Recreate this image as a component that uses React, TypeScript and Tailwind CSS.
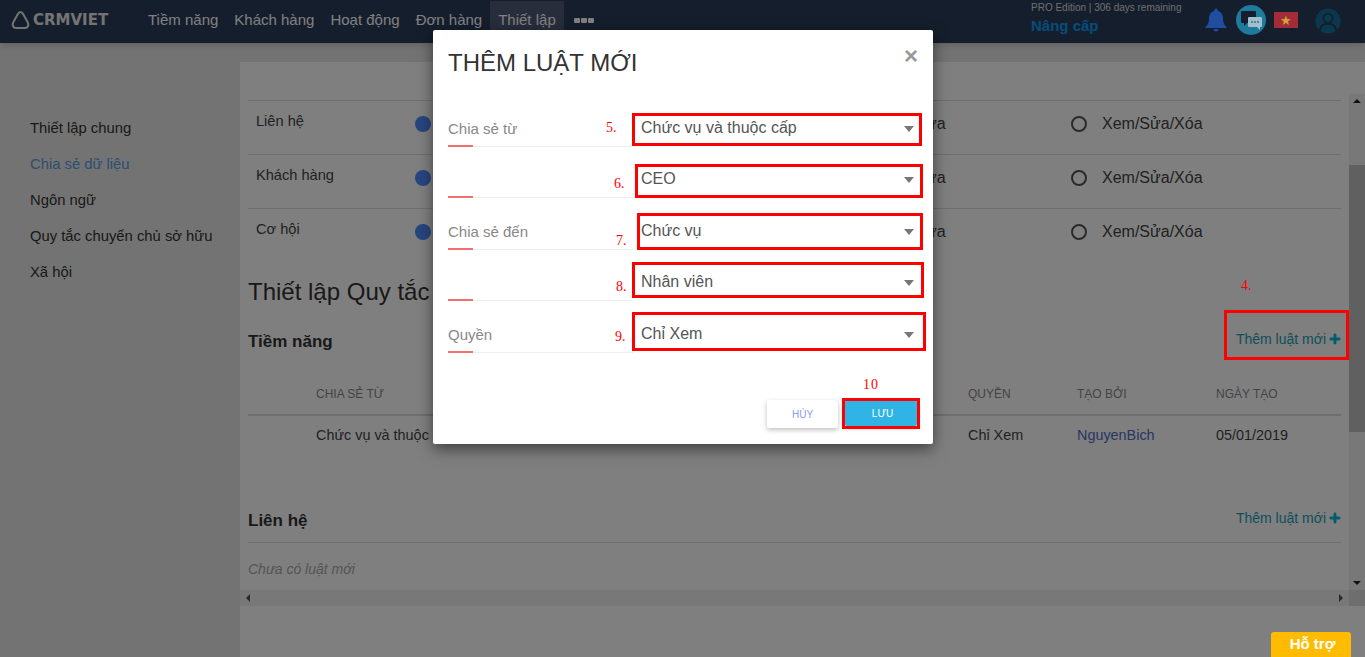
import React from "react";
import { Plus } from "lucide-react";

const navItems = ["Tiềm năng", "Khách hàng", "Hoạt động", "Đơn hàng", "Thiết lập"];
const sideItems = ["Thiết lập chung", "Chia sẻ dữ liệu", "Ngôn ngữ", "Quy tắc chuyển chủ sở hữu", "Xã hội"];
const shareRows = ["Liên hệ", "Khách hàng", "Cơ hội"];

const fields = [
  { label: "Chia sẻ từ", value: "Chức vụ và thuộc cấp", row: "h-[51px]" },
  { label: "", value: "CEO", row: "h-[51px]" },
  { label: "Chia sẻ đến", value: "Chức vụ", row: "h-[52px]" },
  { label: "", value: "Nhân viên", row: "h-[51px]" },
  { label: "Quyền", value: "Chỉ Xem", row: "h-[52px]" },
];

function Radio({ on, label }: { on?: boolean; label?: string }) {
  return (
    <div className="flex items-center gap-[15px] h-4 mt-[15px]">
      {on ? (
        <span className="w-4 h-4 rounded-full bg-[#4d8cff] shrink-0" />
      ) : (
        <span className="w-4 h-4 rounded-full border-2 border-[#555] shrink-0" />
      )}
      {label && <span className="text-base text-[#444] whitespace-nowrap">{label}</span>}
    </div>
  );
}

function AddRule() {
  return (
    <button className="flex items-center gap-[2px] text-sm text-[#1b9db5]">
      Thêm luật mới <Plus size={14} strokeWidth={5} className="text-[#00bcd4]" />
    </button>
  );
}

function Header() {
  return (
    <header className="h-[43px] shrink-0 bg-[#2a3c58] flex items-center relative shadow-md">
      <div className="flex items-center w-[140px] pl-[11px] gap-[3px] pb-[3px]">
        <svg width="19" height="20" viewBox="0 0 19 20" fill="none" stroke="#e8e8e8" strokeWidth="2">
          <path d="M9.5 2 C8 2 7.4 3 6.6 4.4 L2.4 12 C1 14.6 1.6 17.6 4.8 18 L14.2 18 C17.4 17.6 18 14.6 16.6 12 L12.4 4.4 C11.6 3 11 2 9.5 2 Z" />
        </svg>
        <span className="text-[15px] font-bold text-[#e8e8e8] font-['DejaVu_Sans']">CRMVIET</span>
      </div>
      <nav className="flex h-full items-center text-[15px] text-white">
        {navItems.map((item) => (
          <span
            key={item}
            className={
              item === "Thiết lập"
                ? "h-[42px] mt-[1px] px-2 pb-[3px] flex items-center bg-[#505a78]"
                : "px-2 h-full pb-[3px] flex items-center"
            }
          >
            {item}
          </span>
        ))}
        <span className="ml-[10px] mb-[3px] flex gap-[1px]">
          <i className="w-[6px] h-[5px] rounded-[1px] bg-white block" />
          <i className="w-[6px] h-[5px] rounded-[1px] bg-white block" />
          <i className="w-[6px] h-[5px] rounded-[1px] bg-white block" />
        </span>
      </nav>
      <div className="ml-auto flex items-center h-full">
        <div className="w-[174px] h-full pt-[1px]">
          <div className="text-[10px] leading-[13px] text-[#ddd]">PRO Edition | 306 days remaining</div>
          <div className="text-[15px] leading-[22px] mt-px font-bold text-[#0a9bf0]">Nâng cấp</div>
        </div>
        <svg width="22" height="25" viewBox="0 0 22 25" className="relative z-10 mr-[9px] mb-[3px]" fill="#1f4da0">
          <path d="M11 0.5 a1.8 1.8 0 0 1 1.8 1.8 v0.6 C16.6 3.8 18 7 18 10.5 c0 4.5 1.3 6.6 3.5 8.5 v1 H0.5 v-1 C2.7 17.1 4 15 4 10.5 C4 7 5.4 3.8 9.2 2.9 v-0.6 A1.8 1.8 0 0 1 11 0.5 Z M8.5 21 h5 a2.5 2.5 0 0 1 -5 0 Z" />
        </svg>
        <div className="relative z-10 w-[30px] h-[30px] mb-[3px] rounded-full bg-[#1f7b9e] flex items-center justify-center">
          <svg width="24" height="21" viewBox="0 0 24 21">
            <path d="M3 1 h13 a1 1 0 0 1 1 1 v10 a1 1 0 0 1 -1 1 h-8 l-3 3 v-3 h-2 a1 1 0 0 1 -1 -1 v-10 a1 1 0 0 1 1 -1 Z" fill="#141e2c" />
            <path d="M10 7 h12 a1 1 0 0 1 1 1 v8 a1 1 0 0 1 -1 1 h-1 v3 l-3 -3 h-8 a1 1 0 0 1 -1 -1 v-8 a1 1 0 0 1 1 -1 Z" fill="#a3bfcc" />
            <circle cx="13" cy="12" r="1" fill="#1f7b9e" />
            <circle cx="16" cy="12" r="1" fill="#1f7b9e" />
            <circle cx="19" cy="12" r="1" fill="#1f7b9e" />
          </svg>
        </div>
        <div className="relative z-10 w-6 h-4 ml-2 mb-[3px] bg-[#a32c38] flex items-center justify-center text-[13px] leading-none text-[#c9a83a]">★</div>
        <svg width="26" height="26" viewBox="0 0 28 28" className="ml-[17px] mr-[24px] mb-[1px]" fill="none" strokeWidth="2">
          <circle cx="14" cy="14" r="13.5" fill="#14709f" />
          <circle cx="14" cy="11" r="5" stroke="#2a3c58" />
          <path d="M5 24 c1 -5 5 -7 9 -7 s8 2 9 7" stroke="#2a3c58" />
        </svg>
      </div>
    </header>
  );
}

function ScrollArrow({ dir }: { dir: "up" | "down" | "left" | "right" }) {
  const points = {
    up: "4,2 8,6 0,6",
    down: "0,2 8,2 4,6",
    left: "6,0 6,8 2,4",
    right: "2,0 2,8 6,4",
  }[dir];
  return (
    <svg width="8" height="8" viewBox="0 0 8 8" fill={dir === "up" || dir === "down" ? "#222" : "#555"}>
      <polygon points={points} />
    </svg>
  );
}

function Main() {
  return (
    <main className="flex-1 min-w-0 bg-white pt-[32px] flex flex-col">
      <div className="h-[496px] flex">
        <div className="w-[1109px] h-full overflow-hidden px-2 pt-[6px]">
          {shareRows.map((name) => (
            <div key={name} className="h-[54px] border-t border-[#ddd] grid grid-cols-[167px_216px_216px_224px_1fr]">
              <div className="pl-2 pt-[10px] text-[14.6px] text-[#444]">{name}</div>
              <Radio on />
              <Radio />
              <Radio label="Xem/Sửa" />
              <Radio label="Xem/Sửa/Xóa" />
            </div>
          ))}
          <h2 className="h-[60px] flex items-center text-2xl text-[#333]">Thiết lập Quy tắc</h2>
          <div className="h-[38px] flex items-center justify-between">
            <h3 className="text-[17px] font-bold text-[#333] pt-px">Tiềm năng</h3>
            <div className="mb-[5px] mr-[-1px]">
              <AddRule />
            </div>
          </div>
          <div className="mt-3 h-11 pt-px border-b-2 border-[#ddd] grid grid-cols-[68px_652px_109px_139px_1fr] items-center text-xs text-[#888] uppercase">
            <span />
            <span>Chia sẻ từ</span>
            <span>Quyền</span>
            <span>Tạo bởi</span>
            <span>Ngày tạo</span>
          </div>
          <div className="h-[38px] pt-px grid grid-cols-[68px_652px_109px_139px_1fr] items-center text-[14.4px] text-[#444]">
            <span />
            <span>Chức vụ và thuộc cấp</span>
            <span>Chỉ Xem</span>
            <span className="text-[#4d70c8]">NguyenBich</span>
            <span>05/01/2019</span>
          </div>
          <div className="mt-[45px] h-11 border-b border-[#ddd] flex items-center justify-between">
            <h3 className="text-[17px] font-bold text-[#333]">Liên hệ</h3>
            <div className="mb-[5px] mr-[-1px]">
              <AddRule />
            </div>
          </div>
          <div className="h-[52px] flex items-center text-sm italic text-[#aaa]">Chưa có luật mới</div>
        </div>
        <div className="w-4 h-full bg-[#f1f1f1] flex flex-col items-center justify-between">
          <div className="h-[71px] w-full flex justify-center pt-[3px] bg-[#f1f1f1]">
            <ScrollArrow dir="up" />
          </div>
          <div className="w-full h-[267px] bg-[#c1c1c1]" />
          <div className="flex-1 flex items-end pb-[3px]">
            <ScrollArrow dir="down" />
          </div>
        </div>
      </div>
      <div className="h-4 bg-[#f1f1f1] flex">
        <div className="flex-1 flex items-center justify-between px-1">
          <ScrollArrow dir="left" />
          <ScrollArrow dir="right" />
        </div>
        <div className="w-4 bg-[#dcdcdc]" />
      </div>
    </main>
  );
}

function Modal() {
  return (
    <div className="absolute left-[433px] top-[30px] w-[500px] h-[414px] bg-white rounded-[2px] shadow-[0_5px_15px_rgba(0,0,0,0.5)] px-[15px]">
      <div className="h-[66px] flex justify-between">
        <h2 className="pt-[17px] text-2xl leading-8 text-[#333]">THÊM LUẬT MỚI</h2>
        <span className="mt-[12px] text-[24px] leading-7 font-bold text-[#999]">×</span>
      </div>
      {fields.map((f, i) => (
        <div key={i} className={`${f.row} flex`}>
          <div className="w-[185px] shrink-0 relative border-b border-[#eee] flex items-end pb-[6px] text-[15px] text-[#888]">
            {f.label}
            <span className="absolute left-0 -bottom-px w-[25px] h-[2px] bg-[#f07070]" />
          </div>
          <div className="flex-1 flex items-end justify-between pb-[7px] pl-[8px] pr-[4px] text-base text-[#555]">
            <span>{f.value}</span>
            <span className="mb-[8px] w-0 h-0 border-x-[5px] border-x-transparent border-t-[6px] border-t-[#777]" />
          </div>
        </div>
      ))}
      <div className="mt-[47px] flex justify-end gap-[7px] pr-px">
        <button className="w-[71px] h-7 bg-white rounded-[2px] shadow-[0_2px_5px_rgba(0,0,0,0.25)] text-[10px] text-[#8a9cf0]">HỦY</button>
        <button className="w-[72px] h-[26px] pl-[3px] bg-[#30b4e6] rounded-[2px] shadow-[0_2px_5px_rgba(0,0,0,0.25)] text-[10px] text-white">LƯU</button>
      </div>
    </div>
  );
}

// red notes drawn on top of the screenshot
function Annotations() {
  return (
    <div className="font-['Liberation_Serif',serif] text-sm text-[#ff0000]">
      <div className="absolute left-[632px] top-[113px] w-[290px] h-[33px] border-[3px] border-[#ff0000]" />
      <div className="absolute left-[635px] top-[164px] w-[288px] h-[34px] border-[3px] border-[#ff0000]" />
      <div className="absolute left-[637px] top-[213px] w-[286px] h-[37px] border-[3px] border-[#ff0000]" />
      <div className="absolute left-[632px] top-[262px] w-[292px] h-[36px] border-[3px] border-[#ff0000]" />
      <div className="absolute left-[632px] top-[312px] w-[294px] h-[39px] border-[3px] border-[#ff0000]" />
      <div className="absolute left-[842px] top-[398px] w-[78px] h-[31px] border-[3px] border-[#ff0000]" />
      <div className="absolute left-[1224px] top-[310px] w-[125px] h-[50px] border-[3px] border-[#ff0000]" />
      <span className="absolute left-[606px] top-[118px]">5.</span>
      <span className="absolute left-[614px] top-[174px]">6.</span>
      <span className="absolute left-[616px] top-[231px]">7.</span>
      <span className="absolute left-[616px] top-[277px]">8.</span>
      <span className="absolute left-[615px] top-[327px]">9.</span>
      <span className="absolute left-[863px] top-[375px] tracking-[1px]">10</span>
      <span className="absolute left-[1241px] top-[276px]">4.</span>
    </div>
  );
}

export default function App() {
  return (
    <div className="relative w-[1365px] h-[657px] overflow-hidden bg-[#e6e6e6] font-['Liberation_Sans',sans-serif] flex flex-col">
      <Header />
      <div className="flex-1 flex pt-[19px] min-h-0">
        <aside className="w-[240px] shrink-0 pt-[48px] pl-[30px]">
          {sideItems.map((item) => (
            <div
              key={item}
              className={`h-9 flex items-center text-[14.8px] ${item === "Chia sẻ dữ liệu" ? "text-[#5b9ce0]" : "text-[#333]"}`}
            >
              {item}
            </div>
          ))}
        </aside>
        <Main />
      </div>
      <div className="absolute inset-0 bg-black/50" />
      <Modal />
      <Annotations />
      <button className="absolute left-[1271px] top-[632px] w-[80px] h-[25px] pb-px pl-[3px] bg-[#ffbb00] rounded-t-[3px] text-[15px] font-bold text-white">Hỗ trợ</button>
    </div>
  );
}
